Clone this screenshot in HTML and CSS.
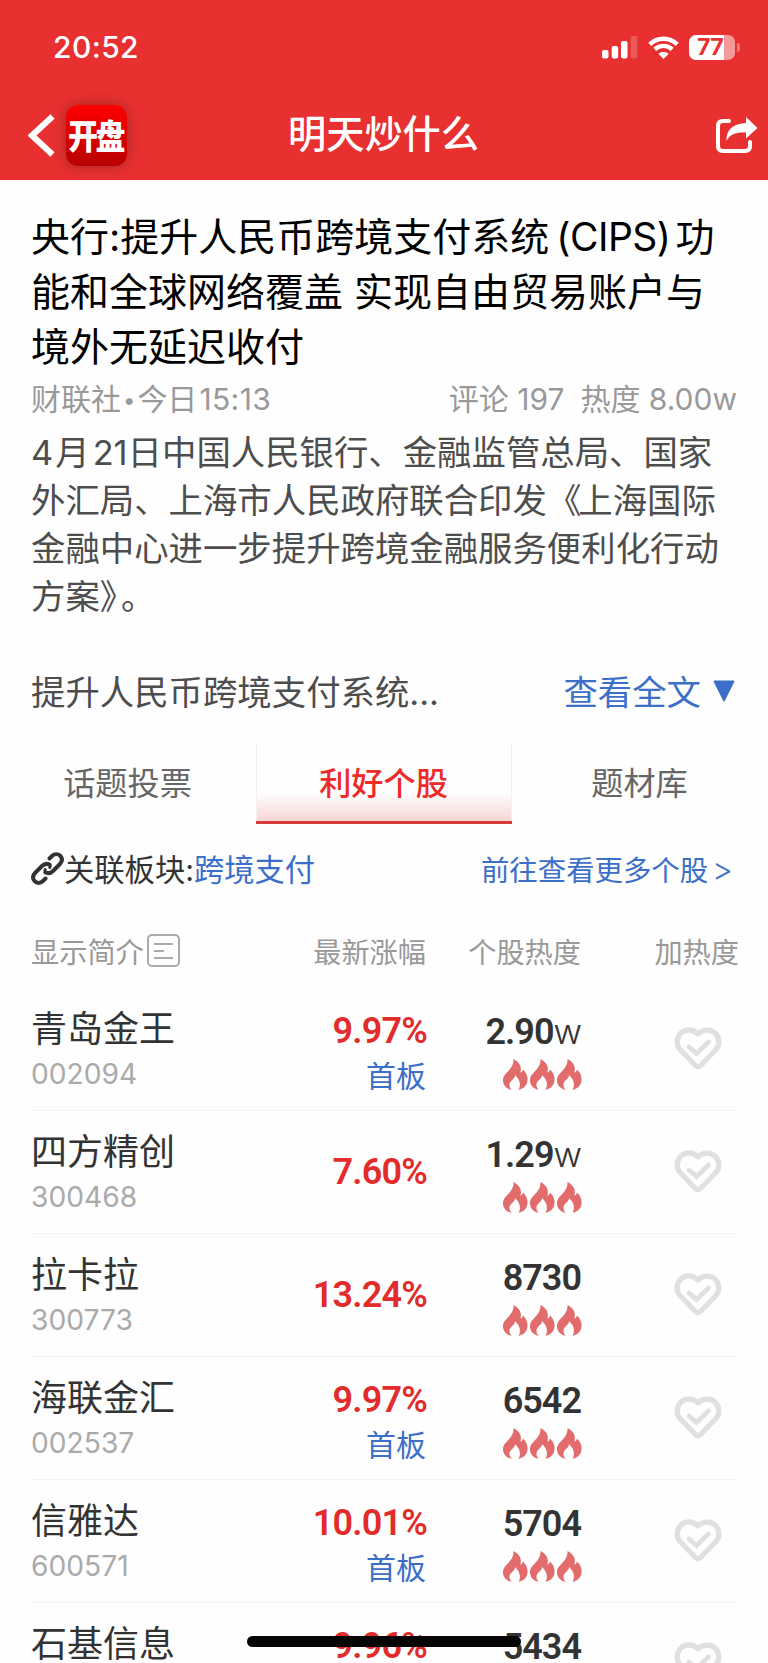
FILE: index.html
```
<!DOCTYPE html>
<html lang="zh-CN">
<head>
    <meta charset="UTF-8">
    <meta name="viewport" content="width=device-width, initial-scale=1.0">
    <title>明天炒什么</title>
    <link rel="stylesheet" href="styles.css">
</head>
<body>
    <svg class="symbols">
        <symbol id="fire" viewBox="0 0 25 31">
            <path d="M10.5 0C18 4 18.500 9 17.500 13.500C19 13.500 19.500 12 20 10.500C23 13.500 25 17 24.500 21.500C24 26.500 21 29.500 15.500 31C18 26.500 17.500 21 12 16C12.500 20 6 21.500 6.500 26C6.500 28 7.500 29.500 8.500 31C3 29.500 0 26 0 21C0 13.500 11 11 10.500 0Z" fill="#e26b6b"/>
        </symbol>
        <symbol id="heart" viewBox="0 0 48 44">
            <path d="M24 7C19 1.500 11 1.500 6.500 6.500C2 11.500 2 18.500 6.500 23L21.500 38.500Q24 41 26.500 38.500L41.500 23C46 18.500 46 11.500 41.500 6.500C37 2 29 2 24 7Z" fill="none" stroke="#e0e0e0" stroke-width="5.200" stroke-linejoin="round"/>
            <path d="M15 20L22.500 26.500L34.500 15" fill="none" stroke="#e0e0e0" stroke-width="4.800" stroke-linecap="round" stroke-linejoin="miter"/>
        </symbol>
    </svg>

    <header class="header">
        <div class="status-bar">
            <span class="time">20:52</span>
            <div class="status-icons">
                <svg class="signal" width="36" height="23" viewBox="0 0 36 23" fill="#fff">
                    <rect x="0" y="14" width="6.500" height="8.500" rx="2"/>
                    <rect x="9.700" y="10" width="6.500" height="12.500" rx="2"/>
                    <rect x="19" y="5" width="6.500" height="17.500" rx="2"/>
                    <rect x="28.700" y="0" width="6.500" height="22.500" rx="2" opacity=".2"/>
                </svg>
                <svg class="wifi" width="31" height="23" viewBox="0 0 31 23">
                    <path d="M1.800 8.300C9.500 .8 21.500 .8 29.200 8.300" fill="none" stroke="#fff" stroke-width="4.400"/>
                    <path d="M6.800 13.400C11.700 8.800 19.300 8.800 24.200 13.400" fill="none" stroke="#fff" stroke-width="4.200"/>
                    <path d="M15.500 23L10.300 17.800C13.200 15.300 17.800 15.300 20.700 17.800Z" fill="#fff"/>
                </svg>
                <div class="battery">77</div>
                <span class="battery-tip"></span>
            </div>
        </div>
        <div class="nav">
            <div class="nav-left">
                <svg width="27" height="43" viewBox="0 0 27 43">
                    <path d="M24.500 2.500L4 21.500L24.500 40.500" fill="none" stroke="#fff" stroke-width="6"/>
                </svg>
                <div class="logo"><span>开盘</span></div>
            </div>
            <h1>明天炒什么</h1>
            <svg class="share" width="42" height="37" viewBox="0 0 42 37">
                <path d="M13 4H7Q2 4 2 9V29Q2 34 7 34H29Q34 34 34 29V25" fill="none" stroke="#fff" stroke-width="4" stroke-linecap="round"/>
                <path d="M30 0L41.500 11L30 21.500V15.500C20 15 14 17 10.500 24C10 13 17 6.500 30 6Z" fill="#fff"/>
            </svg>
        </div>
    </header>

    <main>
        <article class="news">
            <h2>央行:提升人民币跨境支付系统<i class="latin">(CIPS)</i>功<br>能和全球网络覆盖 实现自由贸易账户与<br>境外无延迟收付</h2>
            <div class="meta">
                <span class="source">财联社<b>•</b>今日<i>15:13</i></span>
                <span class="counts"><span>评论 197</span><span>热度 8.00w</span></span>
            </div>
            <p>4<i class="day">月</i>21<i class="day"></i>日中国人民银行、金融监管总局、国家<br>外汇局、上海市人民政府联合印发<i class="quote">《</i>上海国际<br>金融中心进一步提升跨境金融服务便利化行动<br>方案<i class="quote-end">》</i>。</p>
            <div class="more">
                <span>提升人民币跨境支付系统...</span>
                <a>查看全文
                    <svg width="22" height="22" viewBox="0 0 22 22"><path d="M2 .5H20Q22 .5 21 2.500L12 20.500Q11 22.500 10 20.500L1 2.500Q0 .5 2 .5Z" fill="#3c6fc9"/></svg>
                </a>
            </div>
        </article>

        <div class="tabs">
            <div class="tab">话题投票</div>
            <div class="tab active">利好个股</div>
            <div class="tab">题材库</div>
        </div>

        <div class="related">
            <div class="related-left">
                <svg width="33" height="33" viewBox="0 0 33 33" fill="none" stroke="#333" stroke-width="4" stroke-linecap="round">
                    <path d="M14.500 20.500C18 22 20 21 22 19L28.500 12.500C31.500 9.500 31.500 6.500 29.500 4C27 1.500 23.500 1.500 21 4L18.500 6.500"/>
                    <path d="M18.500 12.500C15 11 13 12 11 14L4.500 20.500C1.500 23.500 1.500 26.500 3.500 29C6 31.500 9.500 31.500 12 29L14.500 26.500"/>
                    <path d="M14.500 20.500C13.800 19.700 13.700 18.600 14.200 17.700M18.500 12.500C19.200 13.300 19.300 14.400 18.800 15.300" stroke-width="3.200"/>
                </svg>
                <span>关联板块:</span><a>跨境支付</a>
            </div>
            <a class="go">前往查看更多个股<i>&gt;</i></a>
        </div>

        <div class="list-head">
            <div class="col-name">显示简介
                <svg width="33" height="33" viewBox="0 0 33 33" fill="none" stroke="#aaa" stroke-width="2">
                    <rect x="1" y="1" width="31" height="31" rx="4"/>
                    <path d="M7 10H26M7 17H17M7 24H26"/>
                </svg>
            </div>
            <div>最新涨幅</div>
            <div>个股热度</div>
            <div>加热度</div>
        </div>
        <div id="lista"></div>
    </main>

    <div class="home-bar"></div>

    <script>
        const stocks = [
            { name: '青岛金王', code: '002094', pct: '9.97%', tag: '首板', heat: '2.90', unit: 'w' },
            { name: '四方精创', code: '300468', pct: '7.60%', tag: '', heat: '1.29', unit: 'w' },
            { name: '拉卡拉', code: '300773', pct: '13.24%', tag: '', heat: '8730', unit: '' },
            { name: '海联金汇', code: '002537', pct: '9.97%', tag: '首板', heat: '6542', unit: '' },
            { name: '信雅达', code: '600571', pct: '10.01%', tag: '首板', heat: '5704', unit: '' },
            { name: '石基信息', code: '', pct: '9.96%', tag: '&nbsp;', heat: '5434', unit: '' }
        ];

        const fire = '<svg width="25" height="31"><use href="#fire"/></svg>';
        const lista = document.getElementById('lista');

        stocks.forEach(stock => {
            const div = document.createElement('div');
            div.classList.add('stock');
            div.innerHTML = `<div class="info">
                    <div class="name">${stock.name}</div>
                    <div class="code">${stock.code}</div>
                </div>
                <div class="change${stock.tag ? ' tagged' : ''}">
                    <div class="pct">${stock.pct}</div>
                    ${stock.tag ? `<div class="tag">${stock.tag}</div>` : ''}
                </div>
                <div class="heat">
                    <div class="num">${stock.heat}${stock.unit ? `<span>${stock.unit}</span>` : ''}</div>
                    <div class="fires">${fire}${fire}${fire}</div>
                </div>
                <svg class="like" width="48" height="44"><use href="#heart"/></svg>`;
            lista.appendChild(div);
        });
    </script>
</body>
</html>
```
FILE: styles.css
```
* {
    box-sizing: border-box;
}

body {
    font-family: Inter, 'Noto Sans CJK SC', sans-serif;
    margin: 0;
    height: 1663px;
    overflow: hidden;
    background: #fefefe;
    color: #333;
    white-space: nowrap;
}

i, b {
    font-style: normal;
    font-weight: inherit;
}

svg {
    display: block;
    flex: none;
}

.symbols {
    display: none;
}

/* Cabeçalho */
.header {
    height: 180px;
    background: #e83030;
    color: #fff;
}

.status-bar {
    height: 94px;
    padding: 0 28px 0 53px;
    display: flex;
    justify-content: space-between;
    align-items: center;
}

.time {
    font-size: 30px;
    font-weight: 500;
    letter-spacing: 0.4px;
}

.status-icons {
    display: flex;
    align-items: center;
}

.wifi {
    margin: 0 10px;
}

.battery {
    width: 46px;
    height: 25px;
    border-radius: 7px;
    background: linear-gradient(to right, #fff 35px, #f59a9a 35px);
    color: #e83030;
    font-size: 23px;
    font-weight: 700;
    line-height: 25px;
    padding-left: 8px;
    letter-spacing: -0.5px;
}

.battery-tip {
    width: 3px;
    height: 9px;
    margin-left: 2px;
    border-radius: 0 3px 3px 0;
    background: #f08080;
}

.nav {
    height: 82px;
    padding: 0 10px 0 28px;
    display: grid;
    grid-template-columns: 1fr auto 1fr;
    align-items: center;
}

.nav-left {
    display: flex;
    align-items: center;
    gap: 11px;
}

.logo {
    width: 61px;
    height: 61px;
    border-radius: 12px;
    background: linear-gradient(#ff0000, #b80000);
    box-shadow: 0 0 12px rgba(90, 30, 30, 0.5);
    display: flex;
    align-items: center;
    justify-content: center;
}

.logo span {
    margin: -3px 0 0 -2px;
    font-size: 30px;
    font-weight: 900;
    letter-spacing: -2.5px;
    transform: scaleY(1.15);
}

.nav h1 {
    margin: -3px 0 0 -19px;
    font-size: 38.2px;
    font-weight: 500;
    line-height: 50px;
}

.share {
    justify-self: end;
}

/* Notícia */
.news {
    padding: 29px 31px 0;
}

.news h2 {
    margin: 0;
    font-size: 39px;
    font-weight: 400;
    line-height: 55px;
    color: #000;
}

.latin {
    margin: 0 5px 0 7px;
    letter-spacing: -0.5px;
}

.meta {
    height: 55px;
    padding-bottom: 5px;
    display: flex;
    justify-content: space-between;
    align-items: center;
    font-size: 30px;
    line-height: 44px;
    color: #999;
}

.source i {
    margin-left: 2px;
    letter-spacing: 0.4px;
}

.meta b {
    font-size: 22px;
    line-height: 20px;
    margin: 0 2px;
    vertical-align: 2px;
}

.counts {
    display: flex;
    gap: 16px;
}

.news p {
    margin: 0;
    font-size: 34.4px;
    line-height: 48px;
    color: #4d4d4d;
}

.day {
    margin: 0 3px 0 2px;
}

.day:empty {
    margin: 0;
}

.quote {
    margin-right: -3px;
}

.quote-end {
    margin-right: 4px;
}

.more {
    margin-top: 46px;
    height: 52px;
    padding-bottom: 7px;
    display: flex;
    justify-content: space-between;
    align-items: center;
    font-size: 34.4px;
    color: #4d4d4d;
}

.more a {
    display: flex;
    align-items: center;
    gap: 12px;
    margin-right: 2px;
}

.more svg {
    margin-top: 3px;
}

a {
    color: #3c6fc9;
}

/* Abas */
.tabs {
    margin-top: 23px;
    display: grid;
    grid-template-columns: repeat(3, 1fr);
    grid-template-rows: 82px;
}

.tab {
    text-align: center;
    font-size: 32.2px;
    line-height: 82px;
    padding-right: 1px;
    padding-top: 1px;
    color: #666;
}

.tab.active {
    color: #ee2a2a;
    font-weight: 500;
    height: 82px;
    border-bottom: 3px solid #d93c38;
    background: linear-gradient(#fefefe 65%, #f6d6d4);
    box-shadow: inset 1px 0 #f3f1f1, inset -1px 0 #f3f1f1;
}

.related {
    height: 88px;
    padding: 0 35px 0 31px;
    display: flex;
    justify-content: space-between;
    align-items: center;
    font-size: 30.3px;
}

.related-left {
    display: flex;
    align-items: center;
}

.go {
    font-size: 28.4px;
}

.go i {
    margin-left: 4px;
    font-weight: 300;
    font-size: 32px;
}

/* Lista */
.list-head, .stock {
    margin: 0 31px;
    display: grid;
    grid-template-columns: 240px 156px 154px 156px;
}

.list-head {
    height: 76px;
    grid-template-columns: 150px 245px 155px 158px;
    align-items: center;
    font-size: 28.2px;
    color: #999;
    text-align: right;
}

.col-name {
    display: flex;
    align-items: center;
    gap: 3px;
}

.stock {
    height: 123px;
    border-bottom: 1px solid #f3f3f3;
    align-items: center;
}

.info {
    padding-top: 5px;
}

.change, .heat {
    text-align: right;
}

.name {
    font-size: 36px;
    line-height: 46px;
}

.code {
    height: 45px;
    font-size: 28.2px;
    line-height: 45px;
    color: #aaa;
}

.pct {
    font-family: Roboto, sans-serif;
    font-size: 36px;
    font-weight: 600;
    line-height: 46px;
    letter-spacing: -0.8px;
    color: #e22b2b;
}

.tagged {
    padding-top: 7px;
}

.tag {
    margin-right: 1px;
    font-size: 30px;
    line-height: 44px;
    color: #3c6fc9;
}

.num {
    font-family: Roboto, sans-serif;
    font-size: 36px;
    font-weight: 600;
    line-height: 46px;
    letter-spacing: -1px;
}

.num span {
    font-family: Inter, sans-serif;
    font-size: 35px;
    line-height: 40px;
    font-weight: 300;
}

.fires {
    margin: 4px -1px 0 0;
    display: flex;
    justify-content: flex-end;
    gap: 2px;
}

.like {
    justify-self: end;
    margin-right: 15px;
}

.home-bar {
    position: fixed;
    left: 247px;
    top: 1636px;
    width: 274px;
    height: 11px;
    border-radius: 6px;
    background: #050505;
}
```
